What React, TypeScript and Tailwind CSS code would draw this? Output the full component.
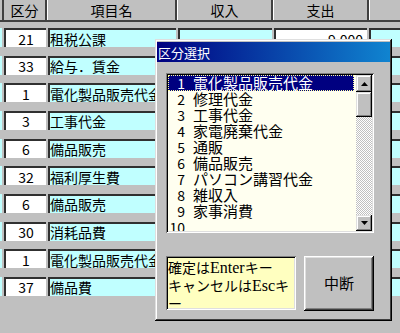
import React from "react";

const rows: [string, string, string, string][] = [
  ["21", "租税公課", "", "9,000"],
  ["33", "給与．賃金", "", ""],
  ["1", "電化製品販売代金", "", ""],
  ["3", "工事代金", "", ""],
  ["6", "備品販売", "", ""],
  ["32", "福利厚生費", "", ""],
  ["6", "備品販売", "", ""],
  ["30", "消耗品費", "", ""],
  ["1", "電化製品販売代金", "", ""],
  ["37", "備品費", "", ""],
];

const items: [string, string][] = [
  ["1", "電化製品販売代金"],
  ["2", "修理代金"],
  ["3", "工事代金"],
  ["4", "家電廃棄代金"],
  ["5", "通販"],
  ["6", "備品販売"],
  ["7", "パソコン講習代金"],
  ["8", "雑収入"],
  ["9", "家事消費"],
  ["10", ""],
];

const raised =
  "bg-[#c0c0c0] shadow-[inset_-1px_-1px_#000,inset_1px_1px_#dfdfdf,inset_-2px_-2px_#808080,inset_2px_2px_#fff]";

function HeaderCell({ w, label }: { w: string; label: string }) {
  return (
    <div
      className={`${w} h-full border-l border-l-white border-r-2 border-r-[#404040] flex items-center justify-center text-[14px] text-black`}
    >
      {label}
    </div>
  );
}

export default function App() {
  return (
    <div className="relative w-[400px] h-[333px] overflow-hidden bg-[#c0c0c0] font-['Noto_Sans_CJK_JP',sans-serif] text-black">
      {/* header */}
      <div className="flex h-[22px] border-b-2 border-b-[#404040]">
        <div className="w-[4px] h-full border-r-2 border-r-[#404040]" />
        <div className="w-[43px] h-full border-r-2 border-r-[#404040] flex items-center justify-center text-[14px]">
          区分
        </div>
        <HeaderCell w="w-[130px]" label="項目名" />
        <HeaderCell w="w-[96px]" label="収入" />
        <HeaderCell w="w-[96px]" label="支出" />
        <div className="flex-1 h-full border-l border-l-white" />
      </div>

      {/* rows */}
      <div className="flex flex-col pt-[6px] gap-[8.67px]">
        {rows.map((r, i) => (
          <div key={i} className="flex h-[19px]">
            <div className="w-[2px] h-full bg-[#c0ffff]" />
            <div className="ml-[2px] w-[42px] h-full bg-white border-t-2 border-l-2 border-[#303030] flex items-center justify-center text-[14px] leading-none">
              {r[0]}
            </div>
            <div className="ml-[2px] w-[128px] h-full bg-[#c0ffff] border-t-2 border-l-2 border-[#303030] flex items-center text-[14px] leading-none whitespace-nowrap overflow-hidden">
              {r[1]}
            </div>
            <div className="ml-[2px] w-[94px] h-full bg-[#c0ffff] border-t-2 border-l-2 border-[#303030] flex items-center justify-end pr-1 text-[14px] leading-none">
              {r[2]}
            </div>
            <div className="ml-[2px] w-[93px] h-full bg-white border-t-2 border-l-2 border-[#303030] flex items-center justify-end pr-[4px] text-[14px] leading-none">
              {r[3]}
            </div>
            <div className="ml-[2px] flex-1 h-full bg-[#c0ffff] border-t-2 border-l-2 border-[#303030]" />
          </div>
        ))}
      </div>

      {/* dialog */}
      <div className="absolute left-[155px] top-[39px] w-[237px] h-[282px] bg-[#c0c0c0] shadow-[inset_-1px_-1px_#000,inset_1px_1px_#dfdfdf,inset_-2px_-2px_#404040,inset_2px_2px_#fff] px-[2px] pt-[3px] flex flex-col">
        <div className="h-[20px] bg-[linear-gradient(90deg,#000080,#1084d0)] flex items-center pl-[1px] text-white text-[13px] leading-none">
          区分選択
        </div>

        {/* listbox */}
        <div className="ml-[9px] mt-[11px] w-[208px] h-[160px] p-[2px] bg-[#fffff0] shadow-[inset_1px_1px_#808080,inset_-1px_-1px_#fff,inset_2px_2px_#000,inset_-2px_-2px_#dfdfdf] flex">
          <div className="flex-1 overflow-hidden flex flex-col">
            {items.map(([n, t], i) => (
              <div
                key={i}
                className={`h-[16px] shrink-0 flex items-center whitespace-nowrap leading-[14px] ${
                  i === 0
                    ? "bg-[#000080] text-white border border-dotted border-[#ffffa0] mr-[2px]"
                    : "border border-transparent"
                }`}
              >
                <span className="w-[16px] text-right text-[14px]">{n}</span>
                <span className="ml-[8px] text-[15px]">{t}</span>
              </div>
            ))}
          </div>
          <div className="w-[16px] flex flex-col">
            <div className={`h-[17px] ${raised} flex items-center justify-center`}>
              <svg width="7" height="4" viewBox="0 0 7 4">
                <polygon points="3.5,0 7,4 0,4" fill="#000" />
              </svg>
            </div>
            <div className={`h-[25px] ${raised}`} />
            <div className="flex-1 bg-[repeating-conic-gradient(#c0c0c0_0%_25%,#ffffff_0%_50%)] bg-[length:2px_2px]" />
            <div className={`h-[16px] ${raised} flex items-center justify-center`}>
              <svg width="7" height="4" viewBox="0 0 7 4">
                <polygon points="0,0 7,0 3.5,4" fill="#000" />
              </svg>
            </div>
          </div>
        </div>

        {/* bottom */}
        <div className="mt-[23px] flex items-start">
          <div className="ml-[9px] w-[130px] h-[54px] p-[2px] bg-[#ffffc0] shadow-[inset_1px_1px_#808080,inset_-1px_-1px_#fff,inset_2px_2px_#000,inset_-2px_-2px_#dfdfdf] overflow-hidden">
            <div className="leading-[17px] whitespace-nowrap">
              <span className="text-[14px]">確定は</span>
              <span className="font-['Liberation_Serif',serif] text-[16px]">Enter</span>
              <span className="text-[14px]">キー</span>
              <br />
              <span className="text-[14px]">キャンセルは</span>
              <span className="font-['Liberation_Serif',serif] text-[16px]">Esc</span>
              <span className="text-[14px]">キ</span>
              <br />
              <span className="text-[14px]">ー</span>
            </div>
          </div>
          <div className="ml-[8px] w-[70px] h-[55px] bg-[#c0c0c0] shadow-[inset_-1px_-1px_#000,inset_1px_1px_#fff,inset_-2px_-2px_#404040,inset_2px_2px_#dfdfdf,inset_-3px_-3px_#808080] flex items-center justify-center text-[15px]">
            中断
          </div>
        </div>
      </div>
    </div>
  );
}
